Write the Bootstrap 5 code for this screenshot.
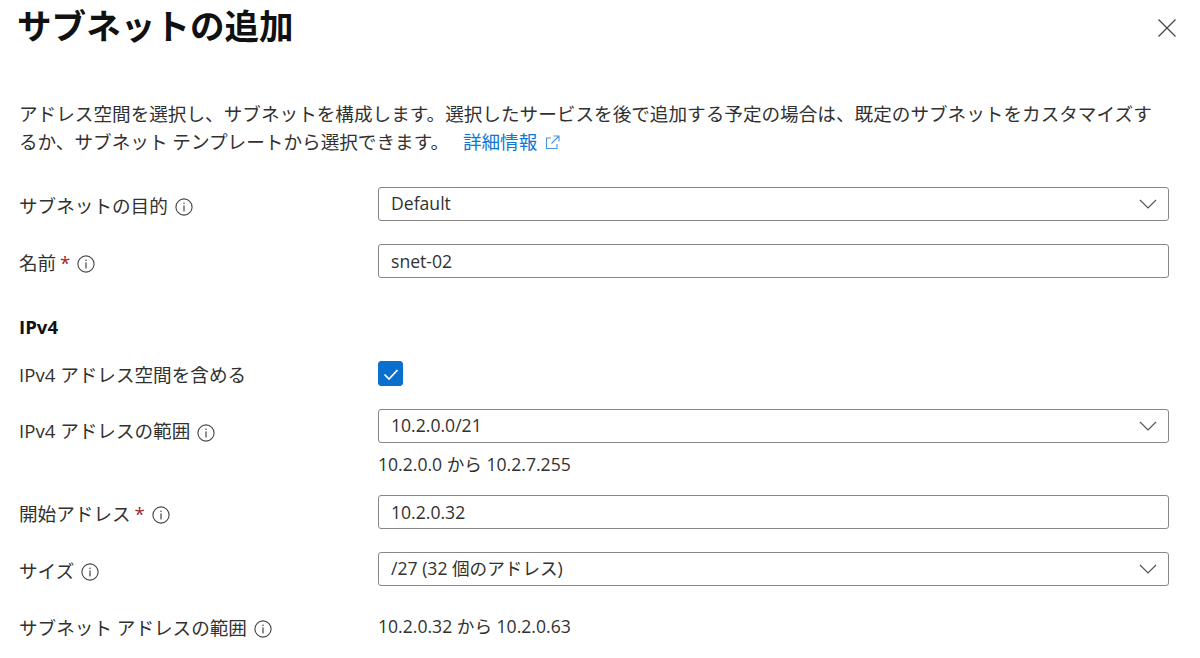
<!DOCTYPE html>
<html lang="ja">
<head>
<meta charset="utf-8">
<title>サブネットの追加</title>
<link href="https://cdn.jsdelivr.net/npm/bootstrap@5.3.0/dist/css/bootstrap.min.css" rel="stylesheet">
<style>
html,body{height:100%;overflow:hidden}
body{font-family:"Open Sans","Noto Sans CJK JP",sans-serif;font-size:18.6px;color:#323130;background:#fff;line-height:28px;padding:0 31px 0 19px}
.pane-title{font-size:34.6px;font-weight:700;color:#111;line-height:44px;margin:4px 0 0 -2px;height:46px}
.pane-close{position:absolute;top:18px;right:23px;width:20px;height:20px;padding:0;border:0;background:none;line-height:0}
.pane-desc{margin:0;padding-top:50px;padding-right:8px;font-size:18.62px}
.pane-desc a{color:#0f78d4;text-decoration:none;margin-left:9px}
.form-line{display:flex;align-items:center;min-height:34px;margin-bottom:23px}
.first-line{margin-top:31px}
.label-cell{width:359px;flex:none;display:flex;align-items:center;gap:7px;padding-top:3px}
.field-cell{flex:1 1 auto;min-width:0}
.req{color:#a4262c;margin-left:-1px}
.form-control.az,.form-select.az{height:34px;padding:0 12px 2px;font-size:17.6px;line-height:30px;color:#323130;border:1px solid #8a8886;border-radius:3px;box-shadow:none}
.form-control.az{padding-bottom:0}
.form-select.az{background-image:url("data:image/svg+xml,%3Csvg xmlns='http://www.w3.org/2000/svg' viewBox='0 0 18 10'%3E%3Cpath d='M1 1l8 8 8-8' fill='none' stroke='%23555' stroke-width='1.2'/%3E%3C/svg%3E");background-size:18px 10px;background-position:right 11px center}
.section-head{font-size:18.6px;font-weight:700;color:#111;line-height:28px;margin:35px 0 17px}
.form-check-input.az-check{width:25px;height:25px;margin:0;display:block;border-radius:3px;background-color:#0b6fce;border-color:#0b6fce;background-size:18px 18px;background-image:url("data:image/svg+xml,%3Csvg xmlns='http://www.w3.org/2000/svg' viewBox='0 0 18 18'%3E%3Cpath d='M2.5 9.5l4.5 4.5 8.5-9' fill='none' stroke='%23fff' stroke-width='1.7'/%3E%3C/svg%3E")}
.hint{font-size:17.6px;line-height:28px;margin-top:7px}
.check-line{margin-bottom:20px;min-height:25px}
.with-hint{align-items:flex-start;margin-bottom:17px}
.with-hint .label-cell{margin-top:5px}
.plain-value{font-size:17.6px}
.info{flex:none;display:block;margin-top:3px}
.ext{vertical-align:-1px;margin-left:3px}
</style>
</head>
<body>
<svg width="0" height="0" class="d-block position-absolute"><defs><symbol id="i-info" viewBox="0 0 18 18"><circle cx="9" cy="9" r="8.1" fill="none" stroke="#444" stroke-width="1.1"/><rect x="8.4" y="7.4" width="1.2" height="6" fill="#444"/><rect x="8.4" y="4.6" width="1.2" height="1.4" fill="#444"/></symbol></defs></svg>

<h1 class="pane-title">サブネットの追加</h1>
<button type="button" class="pane-close" aria-label="閉じる"><svg width="20" height="20" viewBox="0 0 20 20"><path d="M1.5 1.5l17 17M18.5 1.5l-17 17" fill="none" stroke="#444" stroke-width="1.2"/></svg></button>

<p class="pane-desc">アドレス空間を選択し、サブネットを構成します。選択したサービスを後で追加する予定の場合は、既定のサブネットをカスタマイズするか、サブネット テンプレートから選択できます。 <a href="#">詳細情報 <svg class="ext" width="15" height="15" viewBox="0 0 15 15"><path d="M6 3H1.5v10.5H12V9M8.5 1H14v5.5M14 1L6.5 8.5" fill="none" stroke="#4b94d8" stroke-width="1.1"/></svg></a></p>

<form>
<div class="form-line first-line">
  <div class="label-cell"><span>サブネットの目的</span><svg class="info" width="18" height="18"><use href="#i-info"/></svg></div>
  <div class="field-cell"><select class="form-select az"><option>Default</option></select></div>
</div>
<div class="form-line">
  <div class="label-cell"><span>名前 <span class="req">*</span></span><svg class="info" width="18" height="18"><use href="#i-info"/></svg></div>
  <div class="field-cell"><input class="form-control az" value="snet-02"></div>
</div>
<h2 class="section-head">IPv4</h2>
<div class="form-line check-line">
  <div class="label-cell"><span>IPv4 アドレス空間を含める</span></div>
  <div class="field-cell"><input class="form-check-input az-check" type="checkbox" checked></div>
</div>
<div class="form-line with-hint">
  <div class="label-cell"><span>IPv4 アドレスの範囲</span><svg class="info" width="18" height="18"><use href="#i-info"/></svg></div>
  <div class="field-cell"><select class="form-select az"><option>10.2.0.0/21</option></select><div class="hint">10.2.0.0 から 10.2.7.255</div></div>
</div>
<div class="form-line">
  <div class="label-cell"><span>開始アドレス <span class="req">*</span></span><svg class="info" width="18" height="18"><use href="#i-info"/></svg></div>
  <div class="field-cell"><input class="form-control az" value="10.2.0.32"></div>
</div>
<div class="form-line">
  <div class="label-cell"><span>サイズ</span><svg class="info" width="18" height="18"><use href="#i-info"/></svg></div>
  <div class="field-cell"><select class="form-select az"><option>/27 (32 個のアドレス)</option></select></div>
</div>
<div class="form-line">
  <div class="label-cell"><span>サブネット アドレスの範囲</span><svg class="info" width="18" height="18"><use href="#i-info"/></svg></div>
  <div class="field-cell plain-value">10.2.0.32 から 10.2.0.63</div>
</div>
</form>
<script src="https://cdn.jsdelivr.net/npm/bootstrap@5.3.0/dist/js/bootstrap.bundle.min.js"></script>
</body>
</html>
